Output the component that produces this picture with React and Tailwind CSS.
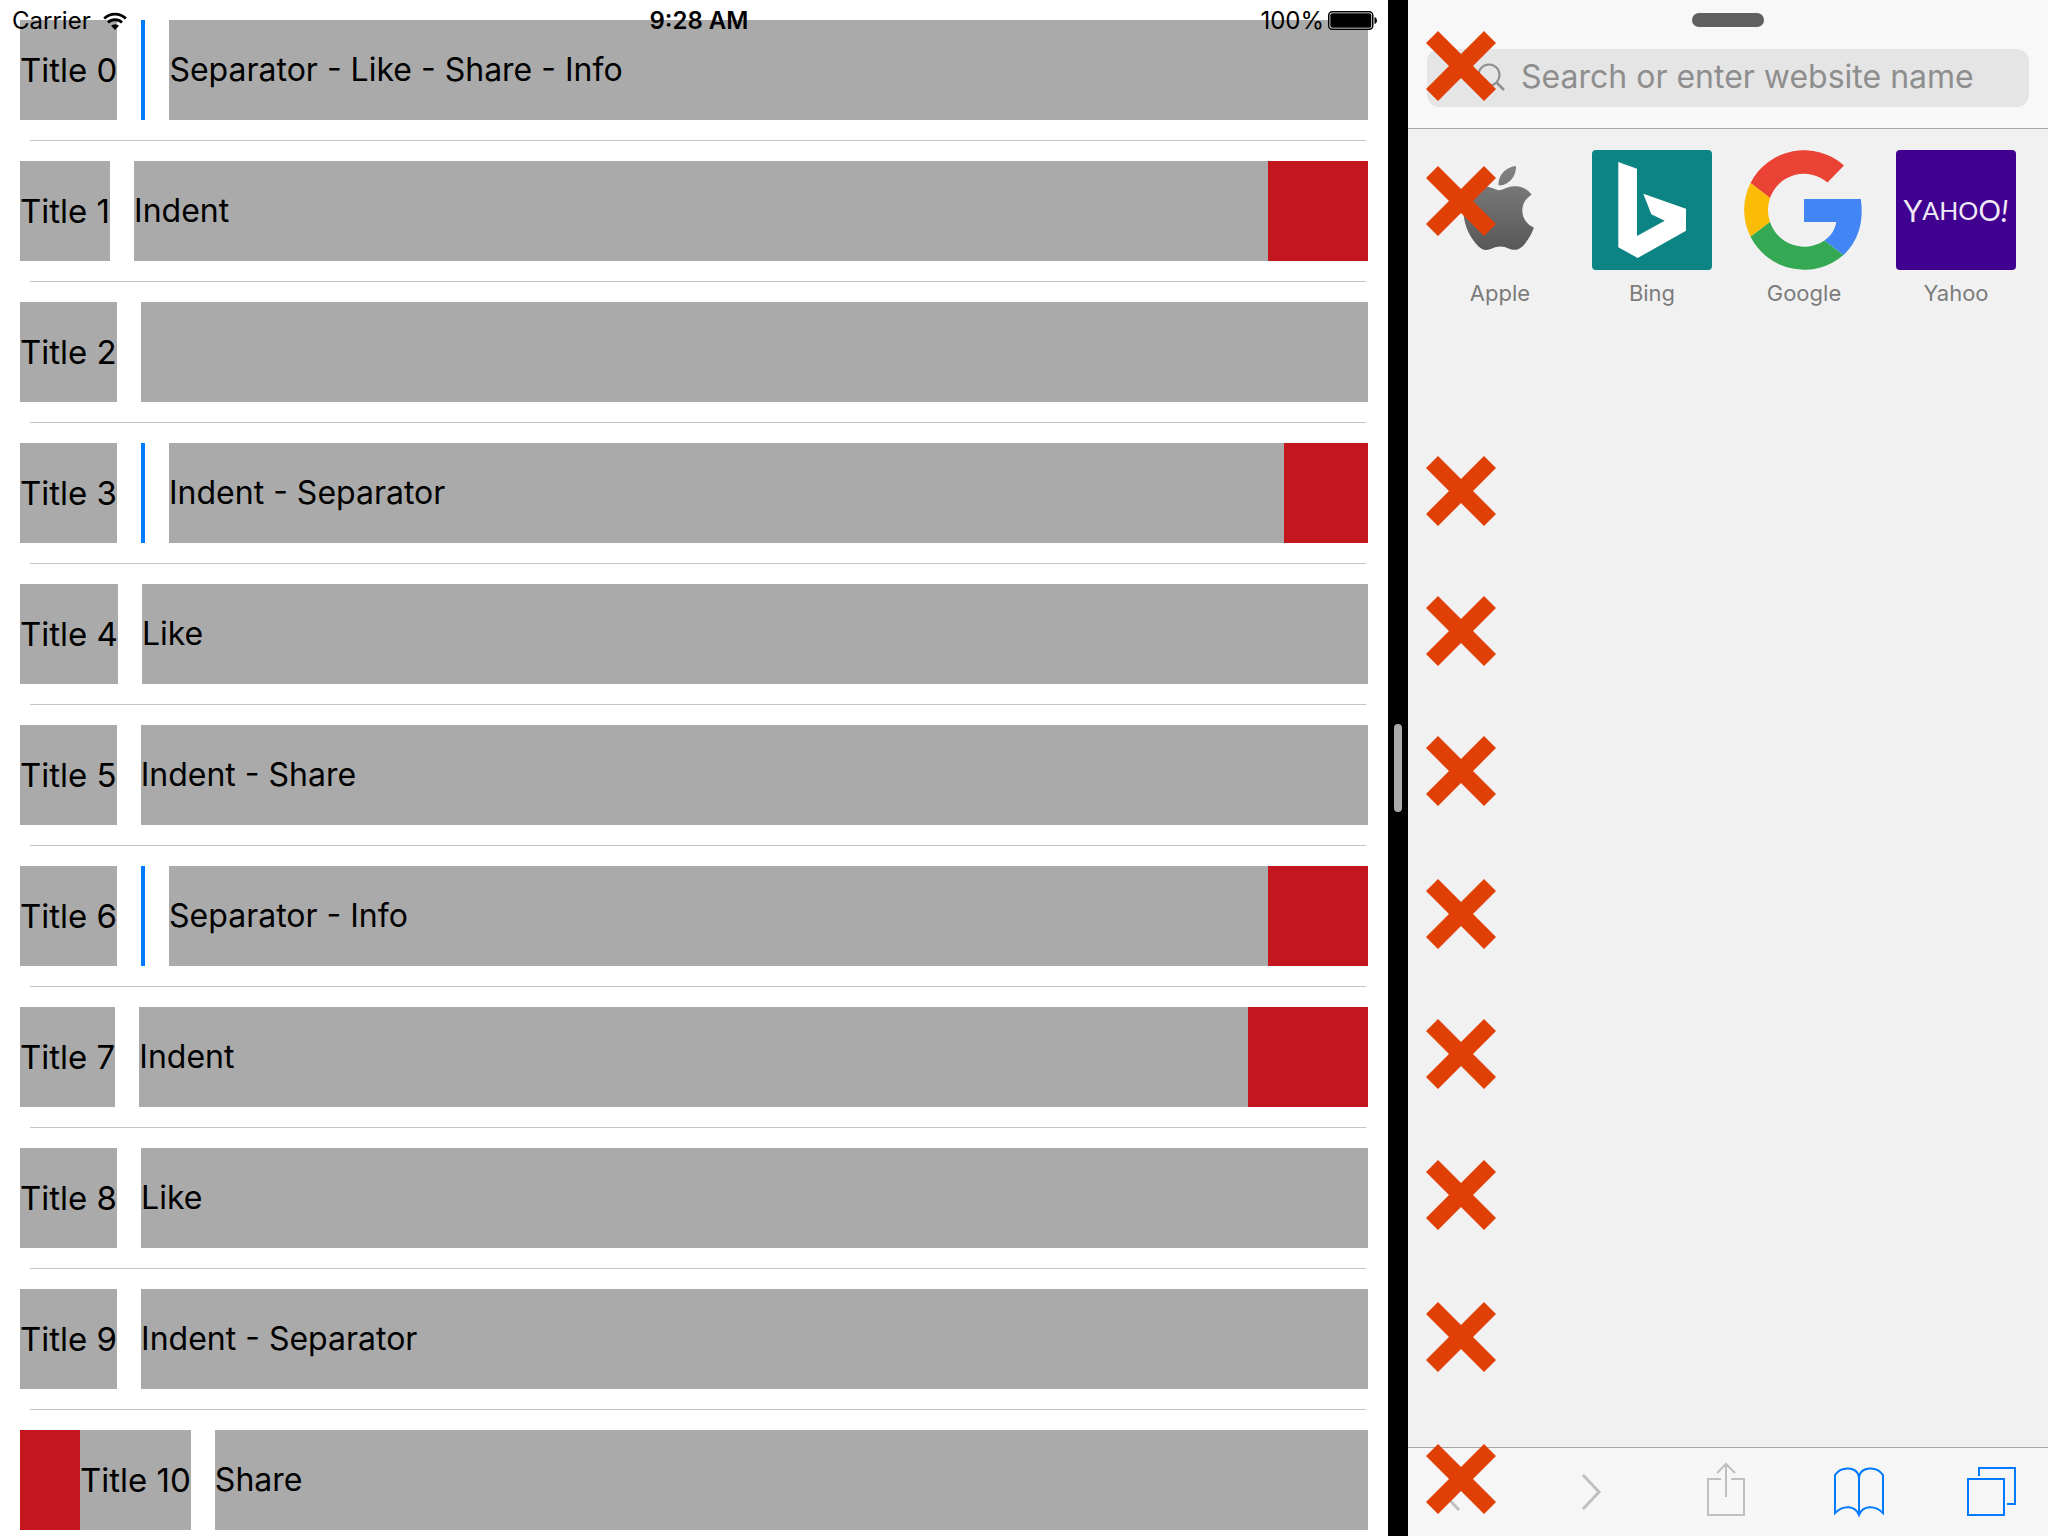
const rows = [
  { title: 'Title 0', text: 'Separator - Like - Share - Info', bar: true },
  { title: 'Title 1', text: 'Indent', end: 'w-[100px]' },
  { title: 'Title 2', text: '' },
  { title: 'Title 3', text: 'Indent - Separator', bar: true, end: 'w-[84px]' },
  { title: 'Title 4', text: 'Like' },
  { title: 'Title 5', text: 'Indent - Share' },
  { title: 'Title 6', text: 'Separator - Info', bar: true, end: 'w-[100px]' },
  { title: 'Title 7', text: 'Indent', end: 'w-[120px]' },
  { title: 'Title 8', text: 'Like' },
  { title: 'Title 9', text: 'Indent - Separator' },
  { title: 'Title 10', text: 'Share', start: 'w-[60px]' },
];

const marks = [
  'top-[31px]', 'top-[166px]', 'top-[456px]', 'top-[596px]', 'top-[736px]',
  'top-[879px]', 'top-[1019px]', 'top-[1160px]', 'top-[1302px]', 'top-[1444px]',
];

function Row({ title, text, bar, start, end }) {
  return (
    <li className="group px-5">
      <div className="flex h-[100px] items-stretch gap-6">
        <div className="flex shrink-0 text-[33px]">
          {start && <div className={`${start} bg-[#c4161f]`} />}
          <span className="flex items-center whitespace-nowrap bg-[#aaaaaa]">{title}</span>
        </div>
        {bar && <div className="w-1 shrink-0 bg-[#007aff]" />}
        <div className="flex min-w-0 flex-1 text-[32px]">
          <span className="flex min-w-0 flex-1 items-center whitespace-nowrap bg-[#aaaaaa]">{text}</span>
          {end && <div className={`${end} shrink-0 bg-[#c4161f]`} />}
        </div>
      </div>
      <div className="mb-5 ml-[10px] mr-[2px] mt-5 h-px bg-[#c4c4c6] group-last:hidden" />
    </li>
  );
}

function StatusBar() {
  return (
    <div className="absolute inset-x-0 top-0 grid h-[42px] grid-cols-3 items-center pl-3 pr-[10px] text-[24px] leading-10">
      <div className="flex items-center gap-3">
        <span>Carrier</span>
        <svg width="24" height="18" viewBox="0 0 24 18" fill="none" role="img" aria-label="Wi-Fi">
          <path d="M1.200 6.500a15.500 15.500 0 0 1 21.600 0" stroke="#000" strokeWidth="2.800" />
          <path d="M5 10.600a10 10 0 0 1 14 0" stroke="#000" strokeWidth="2.800" />
          <path d="M12 18l-4-4.200a5.800 5.800 0 0 1 8 0z" fill="#000" />
        </svg>
      </div>
      <span className="pl-2 text-center font-semibold">9:28 AM</span>
      <div className="flex items-center justify-end gap-1">
        <span>100%</span>
        <svg width="50" height="20" viewBox="0 0 50 20" role="img" aria-label="Battery full">
          <rect x="0.750" y="0.750" width="44" height="17.500" rx="3.500" fill="#fff" stroke="#000" strokeWidth="1.500" />
          <rect x="2.300" y="2.300" width="41" height="14.400" rx="2" fill="#000" />
          <path d="M46.500 6c3.300 1 3.300 6 0 7z" fill="#000" />
        </svg>
      </div>
    </div>
  );
}

function AppleLogo() {
  return (
    <svg width="120" height="120" viewBox="0 0 120 120" aria-hidden="true">
      <defs>
        <linearGradient id="apple" x1="0" y1="0" x2="0" y2="1">
          <stop offset="0" stopColor="#828282" />
          <stop offset="1" stopColor="#585858" />
        </linearGradient>
      </defs>
      <g transform="translate(15.500 16) scale(3.600 3.500)">
        <path fill="url(#apple)" d="M12.152 6.896c-.948 0-2.415-1.078-3.960-1.040-2.040.027-3.910 1.183-4.961 3.014-2.117 3.675-.546 9.103 1.519 12.090 1.013 1.454 2.208 3.090 3.792 3.039 1.520-.065 2.090-.987 3.935-.987 1.831 0 2.350.987 3.960.948 1.637-.026 2.676-1.480 3.676-2.948 1.156-1.688 1.636-3.325 1.662-3.415-.039-.013-3.182-1.221-3.220-4.857-.026-3.040 2.480-4.494 2.597-4.559-1.429-2.090-3.623-2.324-4.390-2.376-2-.156-3.675 1.090-4.610 1.090zM15.530 3.830c.843-1.012 1.400-2.427 1.245-3.830-1.207.052-2.662.805-3.532 1.818-.780.896-1.454 2.338-1.273 3.714 1.338.104 2.715-.688 3.559-1.701" />
      </g>
    </svg>
  );
}

function BingLogo() {
  return (
    <svg width="120" height="120" viewBox="0 0 120 120" aria-hidden="true">
      <rect width="120" height="120" rx="4" fill="#0c8484" />
      <path d="M26.300 12L45 18.700V86l27.700-15.300-13.400-6.400-8-20.600L94 58.700v22L45.700 108l-19.400-10.700z" fill="#fff" />
    </svg>
  );
}

function GoogleLogo() {
  return (
    <svg width="120" height="120" viewBox="0 0 120 120" aria-hidden="true">
      <path d="M6.500 33A60 60 0 0 1 100 15.500L83.500 32.500A36 36 0 0 0 26 48z" fill="#ea4335" />
      <path d="M6.500 33a60 60 0 0 0 0 53.700L26 72a37 37 0 0 1 0-24z" fill="#fbbc05" />
      <path d="M6.500 86.700A60 60 0 0 0 99.500 105L80.500 90.500A36 36 0 0 1 26 72z" fill="#34a853" />
      <path d="M60 49h56.800c3 22-1.500 41-17.300 56L80.500 90.500c7-5 10.500-11 11.800-18.500H60z" fill="#4285f4" />
    </svg>
  );
}

function YahooLogo() {
  return (
    <div className="flex h-[120px] w-[120px] items-center justify-center rounded bg-[#400090] font-['Lato'] text-[25px] leading-8 text-[#f0eaf6]">
      <span className="text-[30px]">Y</span>
      <span>AHO</span>
      <span className="text-[28px]">O</span>
      <i className="text-[30px]">!</i>
    </div>
  );
}

const favorites = [
  { name: 'Apple', Logo: AppleLogo },
  { name: 'Bing', Logo: BingLogo },
  { name: 'Google', Logo: GoogleLogo },
  { name: 'Yahoo', Logo: YahooLogo },
];

function ToolButton({ label, color, disabled, children }) {
  return (
    <button type="button" aria-label={label} disabled={disabled} className="flex h-[60px] w-[52px] items-center justify-center">
      <svg width="52" height="60" viewBox="0 0 52 60" fill="none" stroke={color} strokeWidth="2">
        {children}
      </svg>
    </button>
  );
}

function Browser() {
  return (
    <section className="relative flex w-[31.250%] shrink-0 flex-col bg-[#f1f1f1]">
      <header className="flex flex-col items-center border-b border-[#a8a8a8] bg-[#f8f8f8] px-[19px] pb-[21px] pt-[13px]">
        <div className="h-[14px] w-[72px] rounded-full bg-[#606060]" />
        <label className="mt-[22px] flex h-[58px] w-full items-center gap-4 rounded-xl bg-[#e5e5e5] pb-[2px] pl-[50px]">
          <svg width="28" height="28" viewBox="0 0 28 28" fill="none" stroke="#8e8e93" strokeWidth="2" aria-hidden="true">
            <circle cx="12" cy="12" r="10.500" />
            <path d="M19.500 19.500L27 27" strokeWidth="2.500" />
          </svg>
          <input
            type="text"
            aria-label="Address"
            placeholder="Search or enter website name"
            className="min-w-0 flex-1 bg-transparent text-[32px] leading-10 outline-none placeholder:text-[#8e8e8e]"
          />
        </label>
      </header>
      <nav className="flex justify-between px-8 pt-[21px]">
        {favorites.map(({ name, Logo }) => (
          <a key={name} href="#" className="flex w-[120px] flex-col items-center gap-2 text-[22px] leading-[30px] text-[#7c7c7c]">
            <Logo />
            {name}
          </a>
        ))}
      </nav>
      <footer className="mt-auto flex h-[89px] items-center justify-between border-t border-[#a8a8a8] bg-[#f6f6f6] pl-[25px] pr-[30px]">
        <ToolButton label="Back" color="#c0c0c0" disabled>
          <path d="M26 12L9 30l17 18" strokeWidth="3" />
        </ToolButton>
        <ToolButton label="Forward" color="#c0c0c0" disabled>
          <path d="M17 13l16 17L17 47" strokeWidth="3" />
        </ToolButton>
        <ToolButton label="Share" color="#c0c0c0" disabled>
          <path d="M21 17H8v36h36V17H31M26 35V3M17 11l9-9 9 9" />
        </ToolButton>
        <ToolButton label="Bookmarks" color="#007aff">
          <path d="M26 53V15C24 4 8 4 2 13v38c8-8 20-8 24 2 4-10 16-10 24-2V13C44 4 28 4 26 15" />
        </ToolButton>
        <ToolButton label="Tabs" color="#007aff">
          <path d="M2 17h36v36H2zM13 14V6h36v36h-8" />
        </ToolButton>
      </footer>
      {marks.map((top) => (
        <svg key={top} className={`pointer-events-none absolute left-[18px] ${top}`} width="70" height="70" viewBox="0 0 70 70" aria-hidden="true">
          <path d="M12 0l23 23L58 0l12 12-23 23 23 23-12 12-23-23-23 23L0 58l23-23L0 12z" fill="#e03f06" />
        </svg>
      ))}
    </section>
  );
}

export default function App() {
  return (
    <main className="flex h-screen overflow-hidden bg-white font-['Inter',sans-serif] text-black">
      <section className="relative min-w-0 flex-1 overflow-hidden">
        <ul className="pt-5 leading-10">
          {rows.map((row) => (
            <Row key={row.title} {...row} />
          ))}
        </ul>
        <StatusBar />
      </section>
      <div className="flex w-5 shrink-0 items-center justify-center bg-black">
        <div className="h-[88px] w-2 rounded-full bg-[#aaaaaa]" />
      </div>
      <Browser />
    </main>
  );
}
